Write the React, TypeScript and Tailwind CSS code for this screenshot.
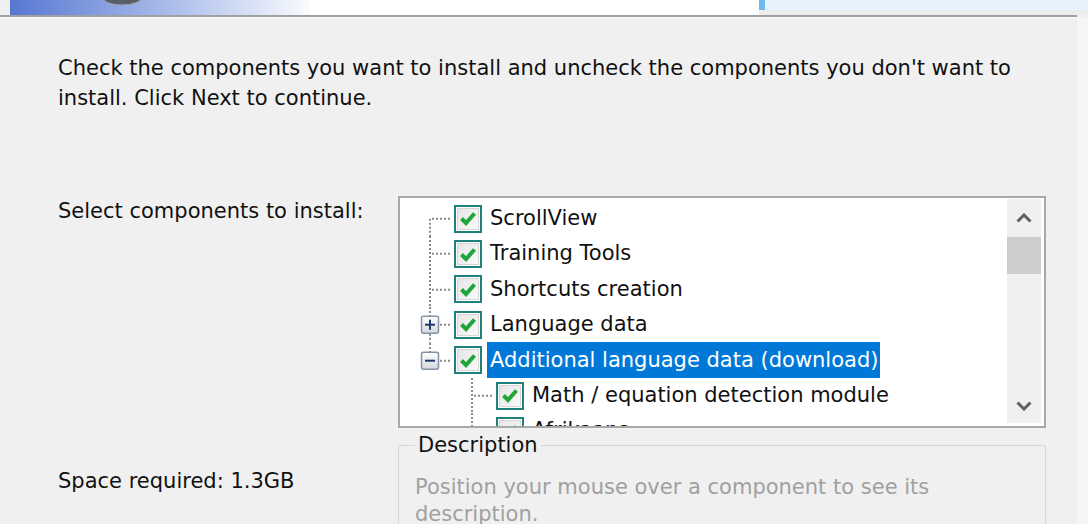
import React from "react";

type Line = "none" | "top" | "bottom" | "full";

interface RowProps {
  label: string;
  level: 0 | 1;
  l0?: Line;
  l1?: Line;
  expander?: "plus" | "minus";
  selected?: boolean;
}

const ROW_H = 35.4;
const DOT = "#8a8a8a";

function VLine({ x, kind }: { x: number; kind: Line }) {
  if (kind === "none") return null;
  const mid = ROW_H / 2;
  const y1 = kind === "bottom" ? mid : 0;
  const y2 = kind === "top" ? mid : ROW_H;
  return <line x1={x} x2={x} y1={y1} y2={y2} stroke={DOT} strokeWidth="2" strokeDasharray="2 2" />;
}

function Expander({ kind }: { kind: "plus" | "minus" }) {
  const cy = ROW_H / 2;
  return (
    <g>
      <defs>
        <linearGradient id="exp" x1="0" y1="0" x2="0" y2="1">
          <stop offset="0" stopColor="#ffffff" />
          <stop offset="1" stopColor="#d4d8e0" />
        </linearGradient>
      </defs>
      <rect x="21.5" y={cy - 8.5} width="17" height="17" rx="2" fill="url(#exp)" stroke="#8593a6" strokeWidth="1.5" />
      <line x1="25" x2="35" y1={cy} y2={cy} stroke="#22376a" strokeWidth="2" />
      {kind === "plus" && <line x1="30" x2="30" y1={cy - 5} y2={cy + 5} stroke="#22376a" strokeWidth="2" />}
    </g>
  );
}

function Gutter({ level, l0 = "none", l1 = "none", expander }: RowProps) {
  const w = level === 0 ? 54 : 96;
  const cy = ROW_H / 2;
  const hx = level === 0 ? 30 : 72;
  return (
    <svg width={w} height={ROW_H} className="shrink-0">
      {expander ? (
        <>
          <VLine x={30} kind={l0 === "full" ? "top" : l0} />
          {l0 === "full" && <line x1={30} x2={30} y1={cy + 9} y2={ROW_H} stroke={DOT} strokeWidth="2" strokeDasharray="2 2" />}
        </>
      ) : (
        <VLine x={30} kind={l0} />
      )}
      <VLine x={72} kind={l1} />
      <line x1={expander ? 40 : hx + 2} x2={hx + 22} y1={cy} y2={cy} stroke={DOT} strokeWidth="2" strokeDasharray="2 2" />
      {expander && <Expander kind={expander} />}
    </svg>
  );
}

function CheckBox() {
  return (
    <span className="w-[28px] h-[28px] shrink-0 border-2 border-[#22807c] p-[1px] bg-white">
      <span className="w-full h-full flex items-center justify-center border border-[#d6d6d6] bg-linear-to-br from-[#e6e6e6] to-[#fafafa]">
        <svg width="18" height="15" viewBox="0 0 18 15">
          <path d="M2.5 7.5 L7 12 L15.5 2.5" stroke="#1fa53a" strokeWidth="4" fill="none" strokeLinejoin="miter" />
        </svg>
      </span>
    </span>
  );
}

function TreeRow(props: RowProps) {
  return (
    <div className="flex items-center h-[35.4px] shrink-0">
      <Gutter {...props} />
      <CheckBox />
      <span
        className={
          "ml-[5px] h-[36px] flex items-center pl-[3px] pr-[2px] whitespace-nowrap " +
          (props.selected ? "bg-[#0078d7] text-white" : "text-[#111]")
        }
      >
        {props.label}
      </span>
    </div>
  );
}

const rows: RowProps[] = [
  { label: "ScrollView", level: 0, l0: "bottom" },
  { label: "Training Tools", level: 0, l0: "full" },
  { label: "Shortcuts creation", level: 0, l0: "full" },
  { label: "Language data", level: 0, l0: "full", expander: "plus" },
  { label: "Additional language data (download)", level: 0, l0: "top", expander: "minus", selected: true },
  { label: "Math / equation detection module", level: 1, l1: "full" },
  { label: "Afrikaans", level: 1, l1: "full" },
];

function Chevron({ up }: { up?: boolean }) {
  return (
    <svg width="16" height="10" viewBox="0 0 16 10">
      <path d={up ? "M1.5 8.5 L8 2 L14.5 8.5" : "M1.5 1.5 L8 8 L14.5 1.5"} stroke="#5f5f5f" strokeWidth="3" fill="none" />
    </svg>
  );
}

export default function App() {
  return (
    <div className="h-[524px] w-[1088px] overflow-hidden flex flex-col bg-[#f0f0f0] font-['DejaVu_Sans',sans-serif] text-[21px] text-[#111]">
      {/* header strip */}
      <div className="relative h-[15px] flex bg-white shrink-0">
        <div className="w-[10px] bg-[#f0f0f0]" />
        <div className="w-[300px] bg-linear-to-r from-[#5877d2] via-[#a6b8e8] to-[#fafbfe]" />
        <div className="flex-1" />
        <div className="w-[329px] flex flex-col">
          <div className="h-[10px] flex">
            <div className="w-[6px] bg-[#6fb7ef]" />
            <div className="flex-1 bg-[#e7f2fc]" />
          </div>
          <div className="flex-1 bg-[#ececec]" />
        </div>
        <svg className="absolute left-[100px] top-0" width="44" height="6">
          <ellipse cx="22" cy="-3" rx="20" ry="8" fill="#585d66" stroke="#9aa4b6" strokeWidth="1" />
        </svg>
      </div>
      <div className="h-[2px] bg-[#a0a0a0] mr-[11px] shrink-0" />
      <div className="h-px bg-white mr-[11px] shrink-0" />

      <div className="flex flex-1 min-h-0">
        <div className="flex-1 pl-[58px] flex flex-col">
          <p className="mt-[35px] leading-[30px]">
            Check the components you want to install and uncheck the components you don't want to
            <br />
            install. Click Next to continue.
          </p>

          <div className="flex mt-[83px]">
            <div className="w-[340px] leading-[30px]">Select components to install:</div>
            <div className="w-[648px] h-[232px] border-2 border-[#a8a8a8] bg-white flex">
              <div className="flex-1 flex flex-col overflow-hidden pt-[3px]">
                {rows.map((r) => (
                  <TreeRow key={r.label} {...r} />
                ))}
              </div>
              <div className="w-[34px] mt-px mb-[3px] mr-[3px] bg-[#f0f0f0] flex flex-col items-center">
                <div className="h-[38px] flex items-center justify-center">
                  <Chevron up />
                </div>
                <div className="w-full h-[37px] bg-[#cdcdcd]" />
                <div className="flex-1" />
                <div className="h-[34px] flex items-center justify-center">
                  <Chevron />
                </div>
              </div>
            </div>
          </div>

          <div className="flex">
            <div className="w-[340px] mt-[38px] leading-[30px]">Space required: 1.3GB</div>
            <fieldset className="w-[648px] mt-[2px] h-[140px] border border-[#d6d6d6] rounded-[2px] px-[16px]">
              <legend className="px-[3px] leading-[30px]">Description</legend>
              <p className="mt-[14px] leading-[27px] text-[#a0a0a0]">
                Position your mouse over a component to see its
                <br />
                description.
              </p>
            </fieldset>
          </div>
        </div>
        <div className="w-[11px] bg-[#f6f6f6]" />
      </div>
    </div>
  );
}
